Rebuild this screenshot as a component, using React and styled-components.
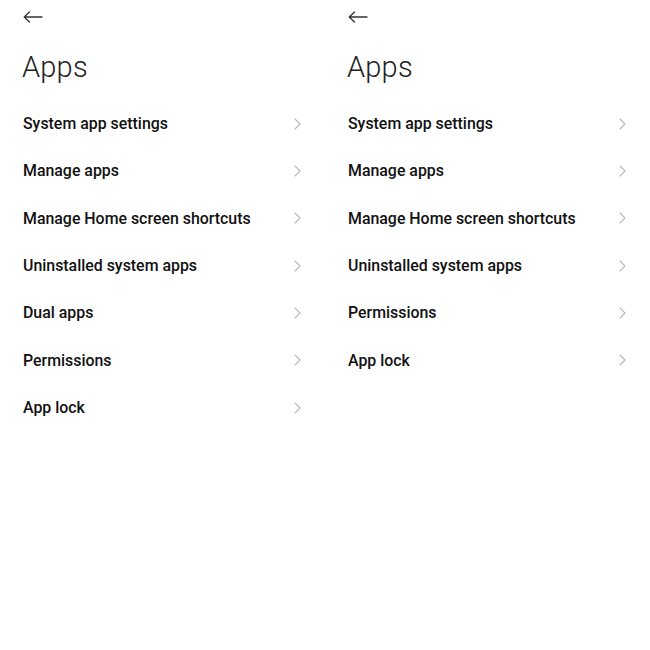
import React from 'react'
import styled, { createGlobalStyle } from 'styled-components'

const GlobalStyle = createGlobalStyle`
  body {
    margin: 0;
    background: #ffffff;
    font-family: Roboto, "Noto Sans", sans-serif;
  }
`;

const leftItems = [
  'System app settings',
  'Manage apps',
  'Manage Home screen shortcuts',
  'Uninstalled system apps',
  'Dual apps',
  'Permissions',
  'App lock',
];

const rightItems = [
  'System app settings',
  'Manage apps',
  'Manage Home screen shortcuts',
  'Uninstalled system apps',
  'Permissions',
  'App lock',
];

const BackArrow = () => (
  <svg width="20" height="12" viewBox="0 0 20 12" fill="none">
    <path d="M19 6H1.5M6.5 1L1.2 6l5.3 5" stroke="#333" strokeWidth="1.3" strokeLinecap="round" strokeLinejoin="round" />
  </svg>
);

const Chevron = () => (
  <svg width="7" height="12" viewBox="0 0 7 12" fill="none">
    <path d="M1 1l5 5-5 5" stroke="#b8b8b8" strokeWidth="1.1" strokeLinecap="round" strokeLinejoin="round" />
  </svg>
);

function Screen({ items }) {
  return (
    <Panel>
      <TopBar>
        <BackArrow />
      </TopBar>
      <Title>Apps</Title>
      <List>
        {items.map((label) => (
          <Row key={label}>
            <Label>{label}</Label>
            <Chevron />
          </Row>
        ))}
      </List>
    </Panel>
  );
}

export default function App() {
  return (
    <>
      <GlobalStyle />
      <Page>
        <Screen items={leftItems} />
        <Screen items={rightItems} />
      </Page>
    </>
  );
}

const Page = styled.div`
  display: grid;
  grid-template-columns: 325px 325px;
  width: 650px;
  height: 650px;
  background: #fff;
`;

const Panel = styled.div`
  display: flex;
  flex-direction: column;
  padding: 0 24px 0 23px;
`;

const TopBar = styled.div`
  height: 32px;
  display: flex;
  align-items: center;
  padding-top: 1px;
`;

const Title = styled.h1`
  margin: 14px 0 0 -1px;
  font-weight: 300;
  font-size: 29px;
  line-height: 40px;
  color: #222;
  letter-spacing: 0.2px;
`;

const List = styled.div`
  display: flex;
  flex-direction: column;
  margin-top: 13px;
`;

const Row = styled.div`
  display: flex;
  align-items: center;
  justify-content: space-between;
  height: 47.33px;
`;

const Label = styled.span`
  font-size: 15.9px;
  font-weight: 500;
  color: #111;
`;
